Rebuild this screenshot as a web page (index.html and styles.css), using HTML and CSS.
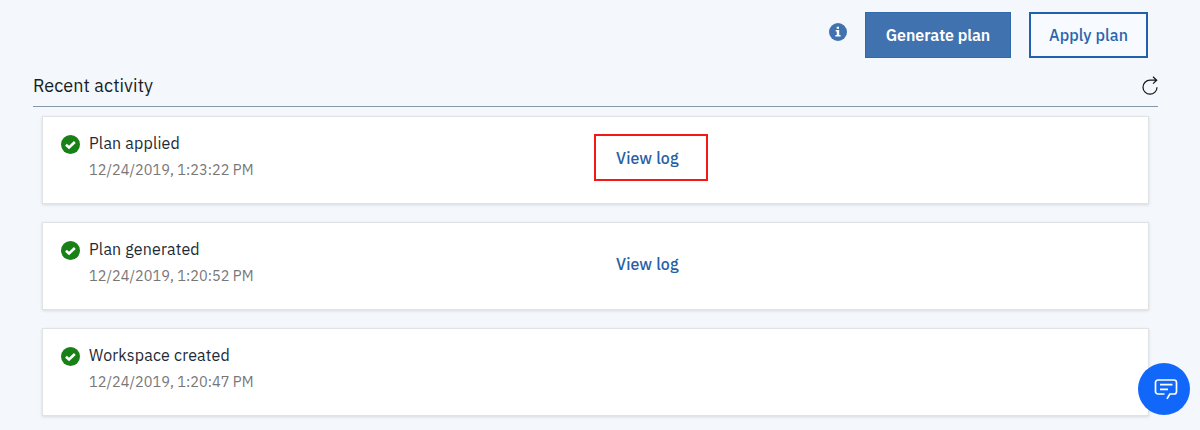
FILE: index.html
```html
<!DOCTYPE html>
<html lang="en">
<head>
<meta charset="utf-8">
<title>Recent activity</title>
<link rel="stylesheet" href="styles.css">
</head>
<body>
<main class="page">
  <div class="toolbar">
    <svg class="info" viewBox="0 0 18 18"><circle cx="9" cy="9" r="9"/><path d="M7.700 3.700h2.300v2.100H7.700zM6.700 7h3.500v4.900h1.400v1.600H6.400v-1.600h1.400V8.600H6.700z"/></svg>
    <button class="btn btn-primary">Generate plan</button>
    <button class="btn btn-secondary">Apply plan</button>
  </div>
  <header class="heading">
    <h1 class="title">Recent activity</h1>
    <svg class="refresh" viewBox="0 0 16 20"><path d="M15 11.200A7 7 0 1 1 8 4.200H14.700M11 .8l3.700 3.400-3.700 3.400"/></svg>
  </header>
  <section class="list">
    <article class="card">
      <svg class="check" viewBox="0 0 18 18"><circle cx="9" cy="9" r="9"/><path d="M4.700 9.200l2.900 2.600 5.500-5.200"/></svg>
      <div class="details"><div class="name">Plan applied</div><div class="date">12/24/2019, 1:23:22 PM</div></div>
      <a class="log highlighted">View log</a>
    </article>
    <article class="card">
      <svg class="check" viewBox="0 0 18 18"><circle cx="9" cy="9" r="9"/><path d="M4.700 9.200l2.900 2.600 5.500-5.200"/></svg>
      <div class="details"><div class="name">Plan generated</div><div class="date">12/24/2019, 1:20:52 PM</div></div>
      <a class="log">View log</a>
    </article>
    <article class="card">
      <svg class="check" viewBox="0 0 18 18"><circle cx="9" cy="9" r="9"/><path d="M4.700 9.200l2.900 2.600 5.500-5.200"/></svg>
      <div class="details"><div class="name">Workspace created</div><div class="date">12/24/2019, 1:20:47 PM</div></div>
    </article>
  </section>
</main>
<button class="chat"><svg viewBox="0 0 24 22"><path d="M10.500 16H4a2.500 2.500 0 0 1-2.500-2.500v-9A2.500 2.500 0 0 1 4 2h16a2.500 2.500 0 0 1 2.500 2.500v9A2.500 2.500 0 0 1 20 16h-4.200l-2.800 4.900M6 6.700h12.500M6 11.300h8"/></svg></button>
</body>
</html>
```

FILE: styles.css
```css
* { box-sizing: border-box; }
body {
  margin: 0;
  height: 430px;
  overflow: hidden;
  background: #f4f7fb;
  color: #152935;
  font-family: "IBM Plex Sans", Roboto, "Noto Sans", sans-serif;
  font-size: 16px;
}
.page { padding: 12px 42px 0 33px; }
.toolbar {
  display: flex;
  justify-content: flex-end;
  align-items: flex-start;
  height: 58px;
  padding-right: 10px;
}
.info { width: 18px; height: 18px; margin: 11px 18px 0 0; fill: #4072b0; }
.info path { fill: #fff; }
.btn {
  height: 46px;
  padding: 0;
  border: 2px solid #2260ad;
  font-family: inherit;
  font-size: 16px;
  line-height: 42px;
}
.btn-primary {
  width: 146px;
  border: 1px solid #3169ad;
  background: #4072b0;
  color: #fff;
  font-weight: 600;
  letter-spacing: -.03px;
}
.btn-secondary {
  width: 119px;
  margin-left: 18px;
  background: #f7faff;
  color: #2b65ab;
  font-weight: 500;
  letter-spacing: .1px;
}
.heading {
  display: flex;
  justify-content: space-between;
  height: 37px;
  border-bottom: 1px solid #8897a6;
}
.title {
  margin: 4px 0 0;
  font-size: 18px;
  font-weight: 400;
  line-height: 24px;
  letter-spacing: .08px;
  color: #171e25;
}
.refresh { width: 16px; height: 20px; margin-top: 6px; fill: none; stroke: #161616; stroke-width: 1.2; }
.list { display: grid; gap: 18px; padding: 9px 9px 0; }
.card {
  display: grid;
  grid-template-columns: 46px 505px 114px;
  height: 88px;
  border: 1px solid #dfe3e6;
  background: #fff;
  box-shadow: 0 1px 3px rgba(0, 0, 0, .12);
}
.check { width: 19px; height: 19px; margin: 18px 0 0 18px; fill: #198018; }
.check path { fill: none; stroke: #fff; stroke-width: 2.4; }
.details { padding-top: 14px; }
.name { line-height: 24px; letter-spacing: .17px; color: #1d2a35; }
.date { margin-top: 4px; font-size: 14.5px; line-height: 22px; letter-spacing: .02px; color: #777; }
.log {
  height: 47px;
  margin-top: 17px;
  border: 2px solid transparent;
  padding-left: 20px;
  font-weight: 500;
  line-height: 44px;
  letter-spacing: .1px;
  color: #2760a5;
}
.highlighted { border-color: #f01913; }
.chat {
  position: absolute;
  left: 1138px;
  top: 363px;
  width: 52px;
  height: 52px;
  padding: 0;
  border: 0;
  border-radius: 50%;
  background: #1267fb;
  display: grid;
  place-items: center;
}
.chat svg { width: 24px; height: 22px; margin-left: 3px; fill: none; stroke: #fff; stroke-width: 1.7; }
```
